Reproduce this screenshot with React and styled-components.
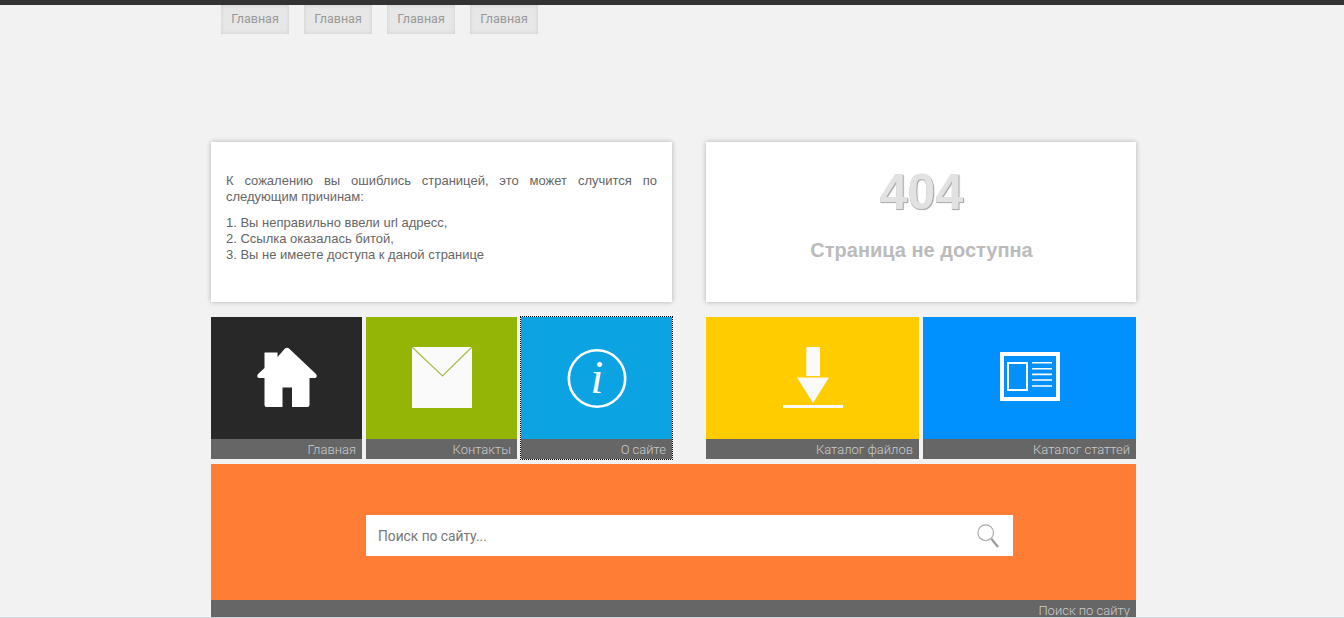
import React from "react";
import styled, { createGlobalStyle } from "styled-components";

const Global = createGlobalStyle`
  html, body { margin: 0; padding: 0; height: 100%; overflow: hidden; background: #f2f2f2; }
  body { font-family: "Liberation Sans", Arial, sans-serif; }
  #root { height: 100%; }
`;
const Page = styled.div`
  height: 618px; display: flex; flex-direction: column; overflow: hidden;
  border-top: 5px solid #333; box-sizing: border-box;
`;
const Main = styled.div`
  flex: 1; min-height: 0; overflow: hidden; padding-left: 211px;
`;
const Foot = styled.div`
  height: 1px; flex: none; background: #cfd6dc;
`;
const Wrap = styled.div`width: 925px;`;
const Nav = styled.nav`
  display: flex; gap: 15px; padding-left: 10px; height: 29px; margin-bottom: 108px;
`;
const NavBtn = styled.a`
  width: 68px; height: 29px; display: flex; align-items: center; justify-content: center;
  background: #e7e7e7; box-shadow: inset 0 0 4px #cfcfcf; color: #999;
  font: 12.5px/1 Roboto, sans-serif; padding-bottom: 1px; box-sizing: border-box;
`;
const Row = styled.div`
  display: grid; grid-template-columns: 461px 430px; column-gap: 34px;
`;
const Card = styled.section`
  height: 160px; background: #fff; box-shadow: 0 0 5px rgba(0,0,0,.28);
  box-sizing: border-box;
`;
const TextCard = styled(Card)`
  padding: 31px 15px 0; color: #666; font-size: 13px; line-height: 16px;
`;
const Para = styled.p`
  margin: 0 0 10px; text-align: justify;
`;
const Reasons = styled.p`margin: 0;`;
const ErrorCard = styled(Card)`
  display: flex; flex-direction: column; align-items: center; padding: 22px 0 0 1px;
`;
const Code = styled.div`
  font-size: 50px; line-height: 56px; font-weight: bold; color: #e2e2e2;
  text-shadow: 0 1px 0 #b0b0b0, 1px 1px 1px #999;
`;
const ErrorText = styled.div`
  margin-top: 18px; font-size: 20px; line-height: 24px; font-weight: bold; color: #bbb;
`;
const Tiles = styled.div`
  display: grid; grid-template-columns: ${p => p.$cols}; column-gap: 4px; margin-top: 15px;
`;
const TileRow = styled(Row)``;
const Tile = styled.a`
  display: flex; flex-direction: column; height: 142px; background: ${p => p.$bg};
  ${p => p.$focus && "outline: 1px dotted #000;"}
`;
const IconArea = styled.div`
  flex: 1; display: flex; justify-content: center; padding-top: 30px;
`;
const Label = styled.div`
  height: 20px; flex: none; background: #666; color: #ccc; text-align: right; padding-right: 6px;
  font: 300 13px/21px Roboto, sans-serif;
`;
const SearchTile = styled.div`
  margin-top: 5px; background: #ff7d35; display: flex; flex-direction: column;
`;
const SearchArea = styled.div`
  height: 136px; padding: 51px 123px 0 155px; box-sizing: border-box;
`;
const SearchBox = styled.form`
  height: 41px; background: #fff; display: flex; align-items: center; padding: 0 14px 0 12px;
`;
const SearchInput = styled.input`
  flex: 1; border: 0; outline: 0; padding: 0; background: transparent;
  font: 13.75px Roboto, sans-serif; color: #777;
  &::placeholder { color: #777; opacity: 1; }
`;
const Svg = styled.svg`display: block; overflow: visible;`;

const HomeIcon = () => (
  <Svg width="60" height="60" viewBox="0 0 60 60">
    <path fill="#fff" d="M7.5 5.5H20.5V10L28 1.5Q30 0 32 1.5L59 27Q61 30 58 31H52.5V58Q52.5 60 50.5 60H35V40.5H25.5V60H9.5Q7.5 60 7.5 58V31H2Q-1 30 1 27L7.5 21Z" />
  </Svg>
);
const MailIcon = () => (
  <Svg width="60" height="61" viewBox="0 0 60 61">
    <rect width="60" height="61" fill="#fafafa" />
    <path d="M0 0L30.5 29L60 0" fill="none" stroke="#a5bd45" strokeWidth="1.2" />
  </Svg>
);
const InfoIcon = () => (
  <Svg width="60" height="60" viewBox="0 0 60 60">
    <circle cx="30" cy="31.5" r="28.2" fill="none" stroke="#fff" strokeWidth="2.6" />
    <text x="30" y="45.5" textAnchor="middle" fill="#fff" fontFamily="'Liberation Serif', serif" fontStyle="italic" fontSize="46">i</text>
  </Svg>
);
const DownloadIcon = () => (
  <Svg width="60" height="61" viewBox="0 0 60 61">
    <path fill="#fafafa" d="M23.3 0H37V29H23.3ZM14 30.5H46L30 56ZM0 58H60V61H0Z" />
  </Svg>
);
const ArticleIcon = () => (
  <Svg width="60" height="60" viewBox="0 0 60 60">
    <g fill="none" stroke="#fff">
      <rect x="2" y="7" width="56" height="45" strokeWidth="4" />
      <rect x="8" y="16" width="19" height="27" strokeWidth="2" />
      <path d="M32 15.7H52M32 21.7H52M32 27.4H52M32 33H52M32 39H52" strokeWidth="1.6" />
    </g>
  </Svg>
);
const SearchIcon = () => (
  <Svg width="22" height="24" viewBox="0 0 22 24">
    <circle cx="8.7" cy="8.7" r="7.8" fill="none" stroke="#aaa" strokeWidth="1.2" />
    <path d="M14.5 15L21 23" stroke="#999" strokeWidth="2.2" />
  </Svg>
);

export default function App() {
  return (
    <>
      <Global />
      <Page>
        <Main>
          <Wrap>
            <Nav>
              {[0, 1, 2, 3].map(i => <NavBtn key={i}>Главная</NavBtn>)}
            </Nav>
            <Row>
              <TextCard>
                <Para>К сожалению вы ошиблись страницей, это может случится по следующим причинам:</Para>
                <Reasons>
                  1. Вы неправильно ввели url адресс,<br />
                  2. Ссылка оказалась битой,<br />
                  3. Вы не имеете доступа к даной странице
                </Reasons>
              </TextCard>
              <ErrorCard>
                <Code>404</Code>
                <ErrorText>Страница не доступна</ErrorText>
              </ErrorCard>
            </Row>
            <TileRow>
              <Tiles $cols="151px 151px 151px">
                <Tile $bg="#282828"><IconArea><HomeIcon /></IconArea><Label>Главная</Label></Tile>
                <Tile $bg="#94b406"><IconArea><MailIcon /></IconArea><Label>Контакты</Label></Tile>
                <Tile $bg="#0ca3e2" $focus><IconArea><InfoIcon /></IconArea><Label>О сайте</Label></Tile>
              </Tiles>
              <Tiles $cols="213px 213px">
                <Tile $bg="#ffcc00"><IconArea><DownloadIcon /></IconArea><Label>Каталог файлов</Label></Tile>
                <Tile $bg="#0091ff"><IconArea><ArticleIcon /></IconArea><Label>Каталог статтей</Label></Tile>
              </Tiles>
            </TileRow>
            <SearchTile>
              <SearchArea>
                <SearchBox>
                  <SearchInput placeholder="Поиск по сайту..." />
                  <SearchIcon />
                </SearchBox>
              </SearchArea>
              <Label>Поиск по сайту</Label>
            </SearchTile>
          </Wrap>
        </Main>
        <Foot />
      </Page>
    </>
  );
}
